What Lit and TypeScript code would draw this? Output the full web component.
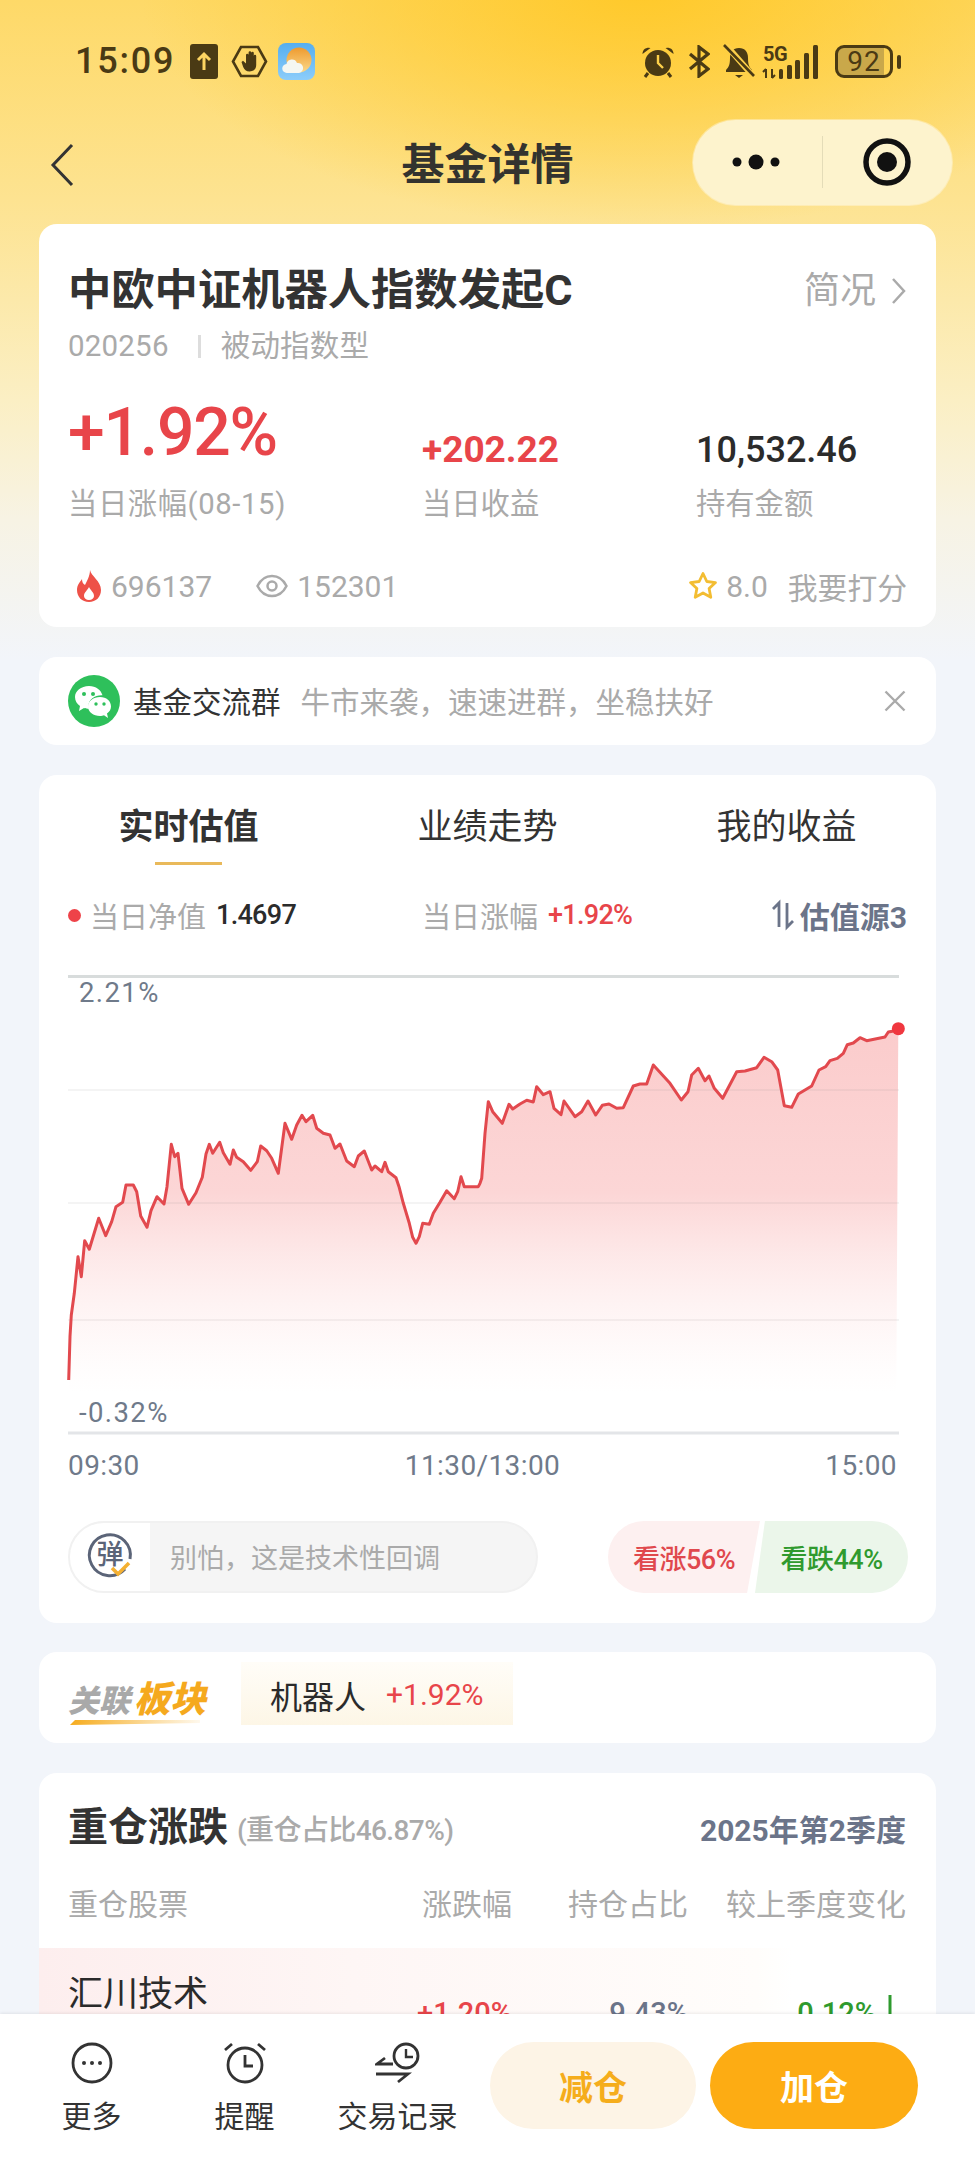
import { LitElement, html, css, svg } from "lit";
import { customElement } from "lit/decorators.js";

const L: number[][] = [[86,1260],[90,1130],[94,1065],[103,1000],[114,890],[124,950],[134,842],[148,868],[176,775],[197,827],[215,785],[228,740],[248,727],[258,675],[280,675],[290,695],[302,768],[321,802],[333,752],[351,710],[372,732],[381,680],[394,553],[404,590],[414,580],[426,685],[446,733],[468,698],[487,652],[498,582],[508,553],[518,580],[539,547],[550,578],[570,613],[580,570],[590,592],[610,605],[632,631],[652,605],[662,558],[680,572],[695,595],[715,640],[735,490],[755,538],[770,495],[786,466],[798,485],[818,466],[830,505],[850,520],[870,525],[885,565],[900,552],[920,603],[943,620],[955,588],[973,573],[995,630],[1005,618],[1025,635],[1035,607],[1045,635],[1068,653],[1077,680],[1090,730],[1108,790],[1118,832],[1128,850],[1138,830],[1148,790],[1168,793],[1180,760],[1200,727],[1220,692],[1243,716],[1253,695],[1263,650],[1273,680],[1315,680]];
const R: number[][] = [[0,670],[5,655],[15,520],[25,425],[38,455],[67,490],[87,433],[98,447],[120,432],[140,421],[160,426],[170,380],[190,404],[210,395],[222,445],[243,464],[252,423],[285,470],[305,455],[324,423],[347,465],[367,436],[387,432],[410,445],[430,443],[460,378],[480,372],[500,372],[520,315],[570,370],[604,420],[624,395],[635,345],[655,325],[675,362],[687,348],[703,385],[728,415],[770,335],[795,333],[830,323],[852,292],[875,305],[893,330],[913,437],[935,442],[955,402],[995,378],[1017,330],[1037,320],[1050,302],[1072,295],[1090,280],[1102,254],[1120,249],[1140,233],[1160,242],[1215,231],[1225,216],[1245,212],[1255,206]];
const CHART_X = 68;
const CHART_Y = 975;
const pts = [
  ...L.map(([x, y]) => [40 + x / 3 - CHART_X, 960 + y / 3 - CHART_Y]),
  ...R.map(([x, y]) => [480 + x / 3 - CHART_X, 960 + y / 3 - CHART_Y]),
];
const lineD = pts.map((p, i) => `${i ? "L" : "M"}${p[0].toFixed(1)} ${p[1].toFixed(1)}`).join(" ");
const last = pts[pts.length - 1];
const areaD = `${lineD} L${(last[0] - 2).toFixed(1)} 418 L${pts[0][0].toFixed(1)} 418 Z`;

@customElement("app-root")
export class AppRoot extends LitElement {
  static styles = css`
    :host {
      display: block;
      position: relative;
      width: 975px;
      height: 2159px;
      overflow: hidden;
      font-family: Roboto, "Noto Sans CJK SC", sans-serif;
      color: #333;
      background:
        radial-gradient(ellipse 500px 240px at 640px -10px, #ffc92a 0%, rgba(255, 205, 60, 0) 100%),
        linear-gradient(180deg, #fed968 0, #fde391 200px, #fbefc4 400px, #f7f3e4 520px, #f2f5fa 660px);
    }
    svg { display: block; flex: none; }
    .status {
      height: 120px;
      box-sizing: border-box;
      padding: 43px 74px 0 75px;
      display: flex;
      justify-content: space-between;
      align-items: flex-start;
      color: #4a3a14;
    }
    .status-l, .status-r { display: flex; align-items: center; height: 37px; }
    .time { font-size: 36px; font-weight: 500; letter-spacing: 1.800px; width: 100px; line-height: 37px; margin-right: 15px; white-space: nowrap; }
    .m13 { margin-left: 13px; }
    .m10 { margin-left: 10px; }
    .m8 { margin-left: 8px; }
    .m15 { margin-left: 15px; }
    .battery {
      width: 58px; height: 33px; box-sizing: border-box;
      border: 3px solid #4a3a14; border-radius: 9px;
      background: linear-gradient(90deg, #c9a84a 0 88%, transparent 88%);
      display: flex; align-items: center; justify-content: center;
      font-size: 28px; line-height: 1; font-weight: 400; letter-spacing: 1px;
    }
    .nub { width: 4px; height: 14px; background: #4a3a14; border-radius: 2px; margin-left: 4px; }

    .nav {
      height: 90px;
      box-sizing: border-box;
      padding: 0 23px;
      display: grid;
      grid-template-columns: 1fr auto 1fr;
      align-items: center;
    }
    .back { margin-left: 27px; }
    .nav-title { font-size: 43px; font-weight: 700; line-height: 50px; color: #33332f; }
    .capsule {
      justify-self: end;
      width: 259px; height: 85px; box-sizing: border-box;
      margin-top: -6px;
      border-radius: 43px;
      background: #fdf3cd;
      box-shadow: 0 0 0 1px rgba(255, 255, 255, .35);
      display: flex; align-items: center;
    }
    .cap-a { width: 129px; display: flex; justify-content: center; margin-right: 0; padding-right: 3px; box-sizing: border-box; }
    .cap-sep { width: 1px; height: 52px; background: #e4dcb8; }
    .cap-b { flex: 1; display: flex; justify-content: center; margin-right: 2px; }

    .card { margin: 0 39px; background: #fff; border-radius: 18px; }
    .summary { margin-top: 14px; height: 403px; box-sizing: border-box; padding: 42px 29px 0; }
    .title-row { display: flex; justify-content: space-between; align-items: center; height: 50px; }
    .fund { font-size: 43.300px; line-height: 50px; font-weight: 700; color: #333; white-space: nowrap; }
    .brief { display: flex; align-items: center; font-size: 36px; line-height: 50px; color: #aaa; margin-right: 1px; }
    .brief svg { margin-left: 15px; }
    .sub { display: flex; align-items: center; height: 34px; margin-top: 13px; font-size: 29.500px; line-height: 34px; color: #aaa; letter-spacing: .2px; }
    .sub .bar { width: 3px; height: 23px; background: #ddd; margin: 0 20px 0 29px; }
    .metrics { display: grid; grid-template-columns: 354px 274px 1fr; align-items: end; margin-top: 35px; }
    .metric { display: flex; flex-direction: column; }
    .lbl { font-size: 29.300px; line-height: 40px; color: #aaa; white-space: nowrap; }
    .lbl.wide { letter-spacing: .6px; }
    .big { font-size: 66px; line-height: 70px; color: #e8454a; font-weight: 500; letter-spacing: -1.200px; margin-bottom: 16px; white-space: nowrap; }
    .mid { font-size: 37px; line-height: 44px; font-weight: 700; margin-bottom: 12px; white-space: nowrap; }
    .mid.dark { font-size: 36px; font-weight: 500; }
    .red { color: #e8454a; }
    .dark { color: #2b2b2b; }
    .meta { display: flex; align-items: center; height: 40px; margin-top: 42px; font-size: 30px; color: #aaa; }
    .meta .flame { margin: 0 8px 0 7px; }
    .meta .eye { margin: 0 9px 0 44px; }
    .meta .sp { flex: 1; }
    .meta .star { margin-right: 8px; }
    .meta .rate { margin-left: 20px; font-size: 29.800px; }

    .banner { margin-top: 30px; height: 88px; box-sizing: border-box; padding: 0 30px 0 29px; display: flex; align-items: center; font-size: 29.500px; }
    .banner .name { margin: -3px 0 0 13px; color: #333; white-space: nowrap; }
    .banner .tip { margin: -3px 0 0 20px; color: #aaa; flex: 1; white-space: nowrap; }

    .est { margin-top: 30px; height: 848px; box-sizing: border-box; padding-top: 31px; }
    .tabs { display: grid; grid-template-columns: repeat(3, 1fr); }
    .tab { display: flex; flex-direction: column; align-items: center; font-size: 35px; line-height: 44px; color: #333; }
    .tab.on { font-weight: 700; }
    .tab i { display: block; width: 67px; height: 3px; margin-top: 12px; }
    .tab.on i { background: #e9b95a; }
    .stats { display: grid; grid-template-columns: 354px 1fr auto; align-items: center; height: 40px; margin-top: 28px; padding: 0 29px 0 29px; font-size: 29px; color: #aaa; }
    .stat { display: flex; align-items: center; white-space: nowrap; }
    .dot { width: 13px; height: 13px; border-radius: 50%; background: #ee4349; margin-right: 9px; }
    .num { font-size: 27px; font-weight: 500; margin-left: 10px; letter-spacing: -.7px; }
    .src { color: #6b7489; font-weight: 700; font-size: 30px; }
    .src svg { margin-right: 5px; }
    .chart { position: relative; height: 460px; margin: 42px 37px 0 29px; }
    .chart svg { width: 831px; height: 460px; overflow: visible; }
    .yl { position: absolute; left: 11px; font-size: 27.500px; line-height: 32px; color: #6f7a8a; letter-spacing: 1.400px; }
    .axis { display: flex; justify-content: space-between; height: 36px; margin: 13px 39px 0 29px; font-size: 28px; line-height: 36px; color: #6f7a8a; letter-spacing: .4px; }
    .act { display: flex; justify-content: space-between; align-items: center; height: 72px; margin-top: 37px; padding: 0 28px 0 29px; }
    .pill { width: 470px; height: 72px; box-sizing: border-box; border: 2px solid #f1f1f1; border-radius: 36px; background: #f5f5f5; display: flex; align-items: center; overflow: hidden; font-size: 27px; color: #aaa; }
    .pill .ico { width: 80px; height: 100%; background: #fff; display: flex; align-items: center; justify-content: center; }
    .pill .ph { margin: -2px 0 0 20px; }
    .dan { position: relative; width: 46px; height: 46px; display: flex; align-items: center; justify-content: center; font-size: 27px; line-height: 1; color: #5b6478; font-weight: 500; margin-top: -4px; }
    .dan svg { position: absolute; left: 0; top: 0; overflow: visible; }
    .vote { display: flex; width: 300px; height: 72px; font-size: 27px; font-weight: 500; letter-spacing: -.5px; }
    .v { height: 72px; display: flex; align-items: center; justify-content: center; white-space: nowrap; }
    .up { width: 152px; color: #e0484d; background: #fdf0f0; border-radius: 36px 0 0 36px; clip-path: polygon(0 0, 100% 0, 91.500% 100%, 0 100%); }
    .down { width: 153px; color: #2f9a2e; background: #ebf6ea; border-radius: 0 36px 36px 0; margin-left: -5px; clip-path: polygon(6.500% 0, 100% 0, 100% 100%, 0 100%); }

    .sector { margin-top: 29px; height: 91px; box-sizing: border-box; padding-left: 29px; display: flex; align-items: center; }
    .logo { width: 142px; display: flex; flex-direction: column; margin-top: 11px; }
    .logo-t { display: flex; align-items: baseline; height: 38px; line-height: 38px; font-weight: 900; font-style: italic; white-space: nowrap; }
    .logo-a { font-size: 31px; color: #a9a9a9; letter-spacing: 0; }
    .logo-b { font-size: 36px; color: #f5a91e; margin-left: 4px; letter-spacing: 0; }
    .logo-l { height: 5px; width: 130px; background: linear-gradient(90deg, #f6ac1e, rgba(246, 172, 30, .08)); clip-path: polygon(5px 0, 100% 0, 100% 60%, 0 100%); margin: 1px 0 0 2px; }
    .chip { margin: -8px 0 0 31px; height: 63px; width: 272px; box-sizing: border-box; padding: 2px 0 0 29px; display: flex; align-items: center; background: linear-gradient(180deg, #fffdf8, #fdf6e6); }
    .chip .n { font-size: 32px; color: #2b2b2b; }
    .chip .p { font-size: 30px; color: #e8454a; margin-left: 20px; }

    .hold { margin-top: 30px; height: 500px; box-sizing: border-box; padding-top: 33px; }
    .hold-h { display: flex; align-items: center; height: 44px; padding: 0 30px 0 29px; }
    .hold-h .t { font-size: 40px; line-height: 44px; font-weight: 700; color: #333; }
    .hold-h .s { font-size: 28px; font-weight: 500; color: #aaa; margin-left: 9px; white-space: nowrap; flex: 1; letter-spacing: -.6px; }
    .hold-h .q { font-size: 30px; font-weight: 700; color: #6b7489; white-space: nowrap; }
    .grid { display: grid; grid-template-columns: 1fr 120px 176px 218px; padding: 0 30px 0 29px; }
    .grid > * { text-align: right; white-space: nowrap; }
    .grid > :first-child { text-align: left; }
    .hd { margin-top: 35px; font-size: 30px; line-height: 40px; color: #aaa; }
    .row { margin-top: 23px; height: 150px; padding-top: 24px; box-sizing: border-box; background: linear-gradient(90deg, #fdeeee 0, #fef6f5 35%, #fffdfb 80%, #fff 84%); font-size: 29px; }
    .row .nm { font-size: 35px; line-height: 46px; color: #2b2b2b; }
    .row .c { padding-top: 21px; line-height: 40px; font-weight: 500; }
    .c.blue { color: #6b7489; }
    .c.green { color: #2f9a2e; display: flex; justify-content: flex-end; align-items: flex-start; }
    .c.green svg { margin: 0 13px 0 11px; }

    .bar-b {
      position: absolute; left: 0; right: 0; bottom: 0; height: 145px; box-sizing: border-box;
      background: #fff; box-shadow: 0 -1px 3px rgba(0, 0, 0, .08);
      padding: 28px 0 0 15px; display: flex; align-items: flex-start;
    }
    .tool { width: 153px; display: flex; flex-direction: column; align-items: center; }
    .tool .lb { margin-top: 13px; font-size: 30px; line-height: 40px; color: #333; white-space: nowrap; }
    .btn { width: 206px; height: 87px; border-radius: 44px; display: flex; align-items: center; justify-content: center; font-size: 34px; font-weight: 700; }
    .sell { margin-left: 16px; background: #fdf4e6; color: #f5ad1c; }
    .buy { margin-left: 14px; width: 208px; background: #fdac13; color: #fff; }
  `;

  render() {
    const ink = "#4a3a14";
    return html`
      <div class="status">
        <div class="status-l">
          <span class="time">15:09</span>
          <svg width="28" height="35" viewBox="0 0 28 35"><rect width="28" height="35" rx="3" fill="${ink}"/><path d="M14 26V10M8 16l6-6 6 6" fill="none" stroke="#fdd562" stroke-width="3"/></svg>
          <svg class="m13" width="37" height="33" viewBox="0 0 37 33"><path d="M10 2h17l8 14.500-8 14.500H10L2 16.500z" fill="none" stroke="${ink}" stroke-width="2.600"/><path d="M10.500 17l1.500-1.200 3 2.700V10a1.300 1.300 0 012.600 0V7.500a1.300 1.300 0 012.600 0V10V8a1.300 1.300 0 012.600 0v3a1.200 1.200 0 012.400 0v9c0 4-2.500 6.500-6.500 6.500-3.500 0-5.500-2-6.500-4.500z" fill="${ink}"/></svg>
          <svg class="m10" width="37" height="37" viewBox="0 0 37 37">
            <defs>
              <linearGradient id="wb" x1="0" y1="0" x2="0" y2="1"><stop offset="0" stop-color="#55aef0"/><stop offset="1" stop-color="#8ccdfa"/></linearGradient>
              <linearGradient id="ws" x1="0" y1="0" x2="0" y2="1"><stop offset="0" stop-color="#ee9a2e"/><stop offset="1" stop-color="#fbd98a"/></linearGradient>
            </defs>
            <rect width="37" height="37" rx="8" fill="url(#wb)"/><circle cx="21" cy="17" r="12.500" fill="url(#ws)"/><path d="M9 30a4.500 4.500 0 01-.5-9 5.500 5.500 0 0110.500-1 5 5 0 012 10z" fill="#f4f7f2"/>
          </svg>
        </div>
        <div class="status-r">
          <svg width="34" height="33" viewBox="0 0 34 33"><circle cx="17" cy="18" r="13" fill="${ink}"/><path d="M17 10v8l5 5" stroke="#fdd04a" stroke-width="2.400" fill="none"/><path d="M1.500 9a6 6 0 018-6zM32.500 9a6 6 0 00-8-6z" fill="${ink}"/><path d="M7 28l-3 4M27 28l3 4" stroke="${ink}" stroke-width="3"/></svg>
          <svg class="m13" width="22" height="33" viewBox="0 0 22 33"><path d="M2 9l18 15-9 7V2l9 7L2 24" fill="none" stroke="${ink}" stroke-width="3.200"/></svg>
          <svg class="m13" width="32" height="35" viewBox="0 0 32 35"><path d="M16 4c6 0 9 4 9 10 0 6 1 9 4 12v2H3v-2c3-3 4-6 4-12 0-6 3-10 9-10z" fill="${ink}"/><path d="M12 31h8l-4 3z" fill="${ink}"/><path d="M2 0l28 32" stroke="#fdd04a" stroke-width="6"/><path d="M1 1l30 31" stroke="${ink}" stroke-width="2.600"/></svg>
          <svg class="m8" width="57" height="34" viewBox="0 0 57 34" style="overflow:visible">
            <text x="0" y="16" font-family="Roboto" font-size="20" font-weight="700" fill="${ink}" letter-spacing="-.4">5G</text>
            <path d="M3 33v-9M0 27l3-3M9 24v9M12 30l-3 3" stroke="${ink}" stroke-width="2" fill="none"/>
            <rect x="16" y="24" width="4" height="10" rx="1.500" fill="${ink}"/><rect x="24" y="20" width="5" height="14" rx="1.500" fill="${ink}"/><rect x="32" y="15" width="5" height="19" rx="1.500" fill="${ink}"/><rect x="41" y="8" width="5" height="26" rx="1.500" fill="${ink}"/><rect x="50" y="0" width="5" height="34" rx="1.500" fill="${ink}"/>
          </svg>
          <div class="battery m15">92</div><div class="nub"></div>
        </div>
      </div>

      <div class="nav">
        <svg class="back" width="24" height="44" viewBox="0 0 24 44"><path d="M22 2L3 22l19 20" fill="none" stroke="#333" stroke-width="3"/></svg>
        <div class="nav-title">基金详情</div>
        <div class="capsule">
          <div class="cap-a"><svg width="52" height="18" viewBox="0 0 52 18"><circle cx="7" cy="9" r="4.500" fill="#111"/><circle cx="26" cy="9" r="7.500" fill="#111"/><circle cx="45" cy="9" r="4.500" fill="#111"/></svg></div>
          <div class="cap-sep"></div>
          <div class="cap-b"><svg width="48" height="48" viewBox="0 0 48 48"><circle cx="24" cy="24" r="21" fill="none" stroke="#111" stroke-width="5.500"/><circle cx="24" cy="24" r="10" fill="#111"/></svg></div>
        </div>
      </div>

      <section class="card summary">
        <div class="title-row">
          <div class="fund">中欧中证机器人指数发起C</div>
          <div class="brief">简况<svg width="15" height="28" viewBox="0 0 15 28"><path d="M2 2l11 12L2 26" fill="none" stroke="#aaa" stroke-width="2.500"/></svg></div>
        </div>
        <div class="sub"><span>020256</span><span class="bar"></span><span>被动指数型</span></div>
        <div class="metrics">
          <div class="metric"><div class="big">+1.92%</div><div class="lbl wide">当日涨幅(08-15)</div></div>
          <div class="metric"><div class="mid red">+202.22</div><div class="lbl">当日收益</div></div>
          <div class="metric"><div class="mid dark">10,532.46</div><div class="lbl">持有金额</div></div>
        </div>
        <div class="meta">
          <svg class="flame" width="28" height="32" viewBox="0 0 28 32"><path d="M15 0c1 6 11 11 11 20 0 7-5 12-12 12S2 27 2 20c0-5 3-8 5-11 0 3 1 5 3 6 2-4 5-9 5-15zm-1 17c-1 3-5 5-5 9 0 2 2 4 5 4s5-2 5-4c0-4-4-6-5-9z" fill="#ee5148"/></svg>
          <span>696137</span>
          <svg class="eye" width="32" height="26" viewBox="0 0 32 26"><path d="M1.500 13C5 6 10 3 16 3s11 3 14.500 10C27 20 22 23 16 23S5 20 1.500 13z" fill="none" stroke="#aaa" stroke-width="2.500"/><circle cx="16" cy="13" r="4.500" fill="none" stroke="#aaa" stroke-width="2.500"/></svg>
          <span>152301</span>
          <span class="sp"></span>
          <svg class="star" width="30" height="30" viewBox="0 0 30 30"><path d="M15 2.500l3.800 8 8.700 1.100-6.400 6 1.700 8.700L15 22l-7.800 4.300 1.700-8.700-6.400-6 8.700-1.100z" fill="none" stroke="#f3bd32" stroke-width="2.800" stroke-linejoin="round"/></svg>
          <span>8.0</span><span class="rate">我要打分</span>
        </div>
      </section>

      <section class="card banner">
        <svg width="52" height="52" viewBox="0 0 52 52"><circle cx="26" cy="26" r="26" fill="#2ec05b"/><path d="M21 11c-8 0-14 5-14 11 0 4 2 7 5 9l-1 5 5-3c2 .6 3 .8 5 .8-.5-1-.5-2-.5-3 0-6 6-10.500 13-10.500h1C33 15 28 11 21 11z" fill="#fff"/><path d="M32 22c-6.500 0-12 4-12 9.500S25.500 41 32 41c1.500 0 3-.2 4-.7l4 2.700-1-4.500c2.500-1.700 4-4 4-7 0-5.500-4.500-9.500-11-9.500z" fill="#fff"/><circle cx="16" cy="19" r="2" fill="#2ec05b"/><circle cx="25" cy="19" r="2" fill="#2ec05b"/><circle cx="28" cy="29" r="1.700" fill="#2ec05b"/><circle cx="36" cy="29" r="1.700" fill="#2ec05b"/></svg>
        <span class="name">基金交流群</span>
        <span class="tip">牛市来袭，速速进群，坐稳扶好</span>
        <svg width="22" height="22" viewBox="0 0 22 22"><path d="M1.500 1.500l19 19M20.500 1.500l-19 19" stroke="#aaa" stroke-width="2.400"/></svg>
      </section>

      <section class="card est">
        <div class="tabs">
          <div class="tab on">实时估值<i></i></div>
          <div class="tab">业绩走势<i></i></div>
          <div class="tab">我的收益<i></i></div>
        </div>
        <div class="stats">
          <div class="stat"><span class="dot"></span>当日净值<span class="num dark">1.4697</span></div>
          <div class="stat">当日涨幅<span class="num red">+1.92%</span></div>
          <div class="stat src"><svg width="24" height="32" viewBox="0 0 24 32"><path d="M8 28V4L2 10M16 4v24l6-6" fill="none" stroke="#6b7489" stroke-width="2.800"/></svg>估值源3</div>
        </div>
        <div class="chart">
          <svg viewBox="0 0 831 460">
            ${svg`
              <defs><linearGradient id="af" gradientUnits="userSpaceOnUse" x1="0" y1="55" x2="0" y2="418"><stop offset="0" stop-color="#fbcccc"/><stop offset=".45" stop-color="#fcd6d6"/><stop offset="1" stop-color="#ffffff" stop-opacity=".4"/></linearGradient></defs>
              <path d="${areaD}" fill="url(#af)"/>
              <path d="M0 1.500H831" stroke="#d8dcdc" stroke-width="3"/>
              <path d="M0 115H831M0 228H831M0 345H831" stroke="#8a8a8a" stroke-opacity=".09" stroke-width="2"/>
              <path d="M0 458H831" stroke="#e3e5e8" stroke-width="3"/>
              <path d="${lineD}" fill="none" stroke="#e2494e" stroke-width="3" stroke-linejoin="round"/>
              <circle cx="${last[0]}" cy="${last[1]}" r="6.500" fill="#f0373f"/>
            `}
          </svg>
          <div class="yl" style="top:2px">2.21%</div>
          <div class="yl" style="top:422px">-0.32%</div>
        </div>
        <div class="axis"><span>09:30</span><span>11:30/13:00</span><span>15:00</span></div>
        <div class="act">
          <div class="pill">
            <div class="ico"><div class="dan">弹<svg width="46" height="46" viewBox="0 0 46 46"><path d="M38 37A20.500 20.500 0 1 1 43 27" fill="none" stroke="#5b6478" stroke-width="3"/><path d="M25 36l6 6 11-11" fill="none" stroke="#f4b032" stroke-width="3.600"/></svg></div></div>
            <span class="ph">别怕，这是技术性回调</span>
          </div>
          <div class="vote"><div class="v up">看涨56%</div><div class="v down">看跌44%</div></div>
        </div>
      </section>

      <section class="card sector">
        <div class="logo"><div class="logo-t"><span class="logo-a">关联</span><span class="logo-b">板块</span></div><div class="logo-l"></div></div>
        <div class="chip"><span class="n">机器人</span><span class="p">+1.92%</span></div>
      </section>

      <section class="card hold">
        <div class="hold-h"><span class="t">重仓涨跌</span><span class="s">(重仓占比46.87%)</span><span class="q">2025年第2季度</span></div>
        <div class="grid hd"><span>重仓股票</span><span>涨跌幅</span><span>持仓占比</span><span>较上季度变化</span></div>
        <div class="grid row">
          <span class="nm">汇川技术</span>
          <span class="c red">+1.20%</span>
          <span class="c blue">9.43%</span>
          <span class="c green">0.12%<svg width="6" height="30" viewBox="0 0 6 30"><path d="M3 2v24" stroke="#2f9a2e" stroke-width="3"/></svg></span>
        </div>
      </section>

      <footer class="bar-b">
        <div class="tool">
          <svg width="42" height="42" viewBox="0 0 42 42"><circle cx="21" cy="21" r="19" fill="none" stroke="#333" stroke-width="2.800"/><circle cx="13" cy="21" r="2" fill="#333"/><circle cx="21" cy="21" r="2" fill="#333"/><circle cx="29" cy="21" r="2" fill="#333"/></svg>
          <span class="lb">更多</span>
        </div>
        <div class="tool">
          <svg width="44" height="42" viewBox="0 0 44 42"><circle cx="22" cy="23" r="17" fill="none" stroke="#333" stroke-width="2.800"/><path d="M22 13v11h8" fill="none" stroke="#333" stroke-width="2.800"/><path d="M2 8l7-6M42 8l-7-6" stroke="#333" stroke-width="2.800"/></svg>
          <span class="lb">提醒</span>
        </div>
        <div class="tool">
          <svg width="46" height="42" viewBox="0 0 46 42"><circle cx="31" cy="14" r="12" fill="none" stroke="#333" stroke-width="2.800"/><path d="M31 7v8h7" fill="none" stroke="#333" stroke-width="2.400"/><path d="M18 22H2l8-6M1 32h32l-10 8" fill="none" stroke="#333" stroke-width="2.800"/></svg>
          <span class="lb">交易记录</span>
        </div>
        <div class="btn sell">减仓</div>
        <div class="btn buy">加仓</div>
      </footer>
    `;
  }
}
